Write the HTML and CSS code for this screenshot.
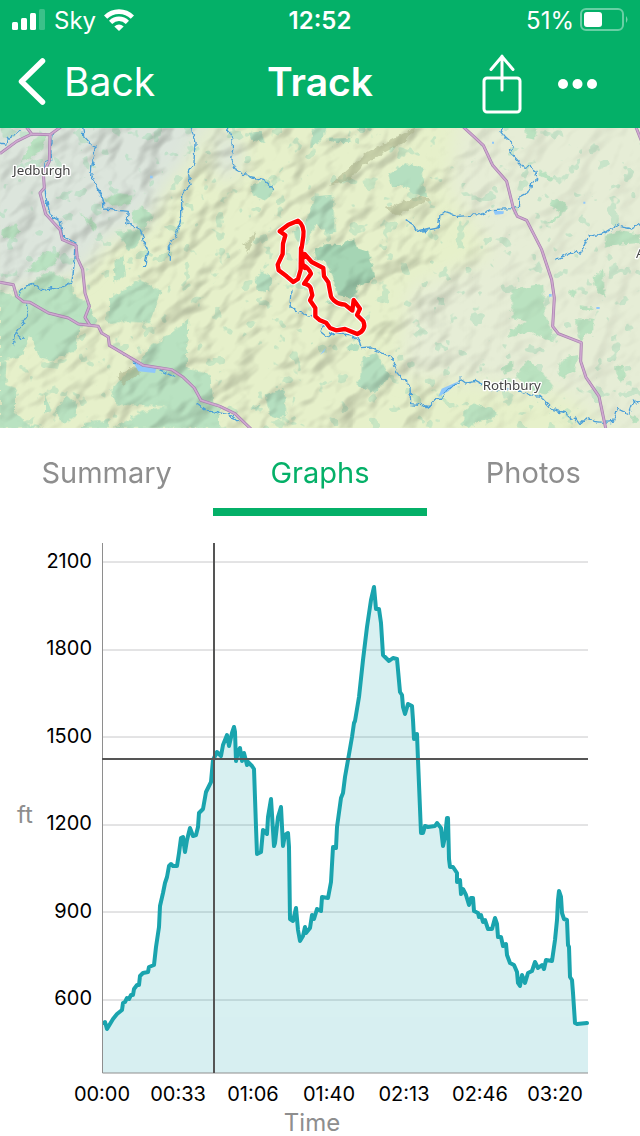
FILE: index.html
```
<!DOCTYPE html>
<html lang="en">
<head>
<meta charset="utf-8">
<meta name="viewport" content="width=device-width, initial-scale=1">
<link rel="stylesheet" href="styles.css">
<title>Track</title>
</head>
<body>
  <header class="top">
    <div class="status">
      <div class="status-left">
        <svg width="34" height="22" viewBox="0 0 34 22" fill="#fff">
          <rect x="0" y="13" width="6" height="8" rx="1.5"/>
          <rect x="9" y="9" width="6" height="12" rx="1.5"/>
          <rect x="18" y="4" width="6" height="17" rx="1.5"/>
          <rect x="27" y="0" width="6" height="21" rx="1.5" opacity=".22"/>
        </svg>
        <span>Sky</span>
        <svg width="30" height="22" viewBox="0 0 30 22" fill="none" stroke="#fff" stroke-width="4.600">
          <path d="M1.6 8.2C9 .8 21 .8 28.400 8.200"/>
          <path d="M6.600 13.300C11.500 8.600 18.500 8.600 23.400 13.300"/>
          <path d="M15 22L10.300 17.400Q15 13.600 19.700 17.400Z" fill="#fff" stroke="none"/>
        </svg>
      </div>
      <span class="clock">12:52</span>
      <div class="status-right">
        <span>51%</span>
        <svg width="48" height="24" viewBox="0 0 48 24">
          <rect x="1" y="1" width="42" height="21" rx="5" fill="none" stroke="#fff" stroke-width="2" opacity=".4"/>
          <rect x="4" y="4" width="18" height="15" rx="3" fill="#fff"/>
          <path d="M46 8Q49 11.500 46 15Z" fill="#fff" opacity=".45"/>
        </svg>
      </div>
    </div>
    <nav class="bar">
      <a class="back" href="#">
        <svg width="28" height="48" viewBox="0 0 28 48" fill="none" stroke="#fff" stroke-width="5.500" stroke-linecap="round" stroke-linejoin="round"><path d="M24.500 4L3.500 24.500L24.500 45"/></svg>
        Back
      </a>
      <h1>Track</h1>
      <div class="actions">
        <button type="button" aria-label="Share">
          <svg width="40" height="60" viewBox="0 0 40 60" fill="none" stroke="#fff" stroke-width="3" stroke-linecap="round" stroke-linejoin="round"><rect x="2" y="24" width="36" height="34" rx="3"/><path d="M20 36V2M9 15.500L20 2.500L31 15.500"/></svg>
        </button>
        <button type="button" aria-label="More">
          <svg width="40" height="10" viewBox="0 0 40 10" fill="#fff"><circle cx="5" cy="5" r="5"/><circle cx="19.500" cy="5" r="5"/><circle cx="34" cy="5" r="5"/></svg>
        </button>
      </div>
    </nav>
  </header>

  <main>
    <svg class="map" viewBox="0 0 1920 900" role="img" aria-label="Map of the track between Jedburgh and Rothbury">
      <defs>
        <filter id="relief" x="0" y="0" width="100%" height="100%" color-interpolation-filters="sRGB">
          <feTurbulence type="fractalNoise" baseFrequency=".007 .011" numOctaves="3" seed="12"/>
          <feDiffuseLighting surfaceScale="42" diffuseConstant="1.12" lighting-color="#fff">
            <feDistantLight azimuth="250" elevation="62"/>
          </feDiffuseLighting>
        </filter>
        <filter id="patches" x="0" y="0" width="100%" height="100%" color-interpolation-filters="sRGB">
          <feTurbulence type="fractalNoise" baseFrequency=".022" numOctaves="3" seed="5"/>
          <feColorMatrix values="0 0 0 0 .69  0 0 0 0 .87  0 0 0 0 .75  22 0 0 0 -14.500"/>
        </filter>
        <filter id="rough" x="0" y="0" width="1920" height="900" filterUnits="userSpaceOnUse" color-interpolation-filters="sRGB">
          <feTurbulence type="fractalNoise" baseFrequency=".06" numOctaves="2" seed="3"/>
          <feDisplacementMap in="SourceGraphic" scale="18" xChannelSelector="R" yChannelSelector="G"/>
        </filter>
        <filter id="soft"><feGaussianBlur stdDeviation="28"/></filter>
        <linearGradient id="fade">
          <stop offset="0" stop-color="#bbb"/>
          <stop offset=".3" stop-color="#fff"/>
          <stop offset=".62" stop-color="#fff"/>
          <stop offset=".8" stop-color="#555"/>
        </linearGradient>
        <mask id="hills"><rect width="1920" height="900" fill="url(#fade)"/></mask>
      </defs>
      <rect width="1920" height="900" fill="#e6f0ca"/>
      <!-- farmland -->
      <g filter="url(#soft)">
        <path fill="#dce5dc" d="M-60-60H640L560 110L500 170L440 300L330 330L240 440L0 500L-60 480Z"/>
        <path fill="#e6edd6" d="M1380-60H2000V960H1880L1700 800L1200 740L1230 480L1480 380L1350 180Z"/>
        <path fill="#dce5dc" d="M650-20L730 60L700 150L650 150Z"/>
      </g>
      <rect width="1920" height="900" filter="url(#patches)" opacity=".55"/>
      <!-- forests -->
      <g filter="url(#rough)">
        <g fill="#b9e2c1">
          <path d="M60 100L100 40L140 10L130 60L85 95ZM10 300L50 290L60 310L40 335L5 325ZM310 215L350 195L395 200L390 230L340 232ZM395 250L425 235L458 265L435 300L400 285ZM345 310L425 305L420 340L385 370L365 335ZM240 250L290 290L280 310ZM75 430L130 375L180 370L165 410L110 432ZM340 400L370 385L378 440L345 462Z"/>
          <path d="M60 485L150 430L215 460L220 500L270 530L290 590L240 595L225 670L150 700L120 690L90 620L60 690L0 700V490L40 500Z"/>
          <path d="M328 510L420 455L485 490L450 585L370 580L325 590Z"/>
          <path d="M445 660L500 625L565 575L560 720L630 740L640 820L660 835V900H340L430 850L500 835L350 830L330 790L370 745L410 720Z"/>
          <path d="M0 700L20 700L15 770L45 780L45 850L80 885L130 900H0ZM165 850L200 800L232 830L225 865L190 890ZM250 885L330 875L325 900H245ZM135 800L155 850L135 855Z"/>
        </g>
        <g fill="#b5dfc0" transform="translate(630 0)">
          <path d="M115 15L155 10L165 45L130 38ZM310 0H350L330 40L300 60ZM350 32L420 30L422 45L380 46ZM120 170L180 155L195 190L160 218L130 200ZM535 140L590 105L638 120L642 205L610 195L580 175L550 178ZM250 310L285 285L318 205L368 200L375 312L350 318L320 285L285 345L260 340Z"/>
          <path d="M312 365L350 348L390 352L432 330L440 360L475 372L497 450L440 478L430 510L385 505L370 450L345 400L320 395Z" fill="#a5d5b4"/>
          <path d="M135 450L155 430L185 450L180 490L140 485ZM355 510L375 505L370 530L350 525ZM455 690L500 675L540 745L495 795L440 770L455 740ZM410 655L430 645L450 655L440 670L415 670ZM165 800L220 780L232 850L210 875L180 865ZM125 840L150 825L140 850ZM440 0H465L460 20Z"/>
        </g>
        <g fill="#bae2c0" transform="translate(1260 0)">
          <path d="M315 0H350L345 35L320 30ZM0 115L15 190L20 205L0 210ZM395 210L435 225L440 240L400 285L385 285L420 255L390 230ZM275 485L320 478L370 470L375 560L400 620L395 645L330 610L265 630L270 610L320 580L275 570ZM450 490L465 480L470 495L455 508ZM515 450L550 425L555 510L530 485ZM465 570L520 575L520 605L480 640ZM430 690L475 680L460 730L430 750L410 735ZM245 720L280 695L280 725L255 738ZM290 740L320 695L370 735L400 775L380 800L330 790ZM555 320L600 310L660 320V345L590 350L555 360ZM480 535L530 540L520 547L480 542ZM155 825L230 850L225 870L170 880L150 900L125 890L130 850ZM585 715L610 710L615 740L605 765L590 740ZM355 120L400 150L395 162L360 140ZM630 860L660 875L640 890Z"/>
        </g>
      </g>
      <!-- hill shading -->
      <g class="shade" mask="url(#hills)">
        <rect x="-300" y="-900" width="2600" height="2600" filter="url(#relief)" transform="rotate(-38 960 450)"/>
      </g>
      <g fill="#a6ad86" opacity=".5" filter="url(#rough)">
        <path d="M990 170L1040 125L1100 75L1200 22L1245 0L1220 38L1150 75L1080 120L1050 155Z"/>
        <path d="M1160 240L1260 205L1290 215L1190 262ZM730 350L770 310L745 375ZM350 745L400 715L420 735L370 770Z"/>
      </g>
      <!-- lakes -->
      <g fill="#8fc7fa">
        <path d="M398 700L470 718L465 735L415 730Z"/>
        <path d="M960 680L977 660L972 672ZM1315 806L1325 782L1380 758L1345 790ZM1480 248L1512 250L1510 258L1485 260Z"/>
        <path d="M450 143h8v8h-8zM1647 498h8v8h-8zM1789 537h10v6h-10zM1476 41h6v6h-6zM1750 221h6v6h-6z"/>
      </g>
      <!-- rivers -->
      <g class="rivers" filter="url(#rough)">
        <path d="M0 48L20 52L25 32L50 18L62 5M162 10L152 60L155 95L135 105L132 160L138 210L150 260L180 278L188 325L228 345L225 395L215 465L180 478L125 488L100 467L62 485L58 500"/>
        <path d="M248 0L252 25L285 60L272 140L290 170L310 220L312 243L385 250L380 285L420 305L443 370L433 418"/>
        <path d="M574 0L585 45L582 105L565 130L570 170L545 200L545 265L525 330L508 355L508 398"/>
        <path d="M78 525L85 560L50 610L40 635L44 658M50 612L68 635M590 825L625 850L660 858M370 680L410 705M475 725L520 745"/>
        <g transform="translate(630 0)">
          <path d="M52 0L65 30L68 65L62 95L75 122L125 150L165 158L195 185M243 485L240 535L262 550L305 563L340 590L330 610L348 625L375 615L425 622L448 640L455 662L485 660L545 688L560 730L600 775L602 830L660 835M0 850L60 860L90 882M590 278L610 290L620 310L660 300"/>
        </g>
        <g transform="translate(1260 0)">
          <path d="M0 310L55 300L60 260L72 250L115 265L180 260L215 245L275 242L298 238L300 205L330 190L335 165L350 155L348 130L325 115L312 118L270 72L280 50L255 28L240 10L248 0"/>
          <path d="M405 395L460 370L482 375L505 325L550 318L590 293L635 303L660 288M0 825L25 838L50 812L65 810L80 785L115 765L120 750L140 765L170 760L215 785L240 790L270 775L330 800L360 805L400 845L440 855L450 875L465 870L480 890L500 870L520 880L550 883L580 880L592 842L625 858L640 815L660 825"/>
        </g>
      </g>
      <!-- roads -->
      <g class="road">
        <path id="r1" d="M0 77L50 40L95 18L150 20L185-5M78-5L95 18M150 20L148 100L130 135L133 180L120 195L137 258L180 305L187 335L228 352L232 390L248 425L255 495L268 535L255 568L270 592"/>
        <path id="r2" d="M0 463L40 470L50 505L70 521L90 523L145 555L205 570L235 588L295 595L305 615L325 627L328 652L345 662L430 712L515 725L550 748L583 780L603 817L660 835L705 857L755 905"/>
        <path id="r3" d="M1388-5L1450 52L1478 112L1520 160L1540 240L1552 265L1580 277L1625 365L1655 455L1663 510L1658 595L1675 617L1744 644L1742 700L1758 748L1797 805L1818 905M1907-5L1925 40"/>
      </g>
      <g class="road-fill">
        <use href="#r1"/><use href="#r2"/><use href="#r3"/>
      </g>
      <!-- recorded track -->
      <defs>
        <path id="track" d="M275 360L280 325Q284 292 264 278L235 290L209 310L226 322L219 347L218 378L203 410L206 427L230 445L250 462L264 453L272 425L273 360L278 410Q298 422 303 437L282 467Q298 470 302 480L307 502L300 517L316 540V565L330 577L348 584L360 600L378 607L405 603L442 618Q456 612 460 603Q466 594 460 580L441 561L450 542L431 516L427 548L405 530Q385 528 378 522Q362 510 362 500L355 463L342 445L340 420L305 402L284 378L272 405L285 420"/>
      </defs>
      <g class="track" transform="translate(630 0)">
        <use href="#track" class="track-edge"/>
        <use href="#track" class="track-line"/>
      </g>
      <g class="places">
        <text x="39" y="140">Jedburgh</text>
        <text x="1448" y="787">Rothbury</text>
        <text x="1908" y="390">A</text>
      </g>
    </svg>

    <nav class="tabs">
      <a href="#">Summary</a>
      <a href="#" class="active" aria-current="page">Graphs</a>
      <a href="#">Photos</a>
    </nav>

    <svg class="chart" viewBox="0 0 640 620" role="img" aria-label="Elevation in feet against time">
      <defs>
        <path id="elevation" d="M2 480L3 479L5 486L8 481L11 476L15 471L20 467L21 460L23 459L25 455L27 456L29 452L31 452L32 446L35 442L37 442L38 433L41 430L46 429L47 424L52 422L54 404L57 384L58 363L61 350L63 340L65 334L67 323L69 321L71 323L75 323L77 310L79 295L81 294L83 309L85 297L88 285L91 293L94 292L96 284L97 270L101 266L104 249L109 239L111 217L115 209L119 213L121 202L125 192L127 203L130 190L132 184L133 189L134 218L136 209L138 205L140 218L142 210L145 222L146 219L150 223L152 226L154 284L155 311L159 309L161 287L165 291L166 274L169 256L172 303L173 300L176 274L179 264L181 303L183 292L186 290L187 304L188 376L191 378L194 365L196 387L198 398L201 393L203 384L204 390L208 385L210 372L212 376L215 366L219 368L220 354L226 355L229 339L231 304L234 305L235 284L239 255L241 250L243 234L246 217L250 194L252 180L253 178L257 154L261 117L265 84L269 57L272 44L274 66L277 66L279 80L281 112L287 118L291 115L295 116L298 149L300 152L301 164L303 171L306 161L310 163L311 177L312 196L315 191L316 217L319 290L321 290L323 283L326 284L333 283L335 280L339 285L341 303L343 294L345 275L346 275L347 316L348 324L351 324L355 330L355 339L358 337L359 351L361 346L364 352L367 362L369 355L371 355L372 368L376 370L377 374L379 372L381 379L383 377L386 386L390 386L393 375L395 381L396 394L399 394L401 403L404 401L405 412L408 420L412 422L415 429L416 440L418 443L420 432L423 440L426 430L430 428L433 419L436 425L440 422L442 426L444 417L450 418L453 397L455 377L456 357L457 348L459 354L460 370L462 376L465 377L466 402L467 404L468 434L470 437L471 450L473 480L475 481L485 480"/>
      </defs>
      <g transform="translate(102 27)">
        <path class="grid" d="M0 19H486M0 107H486M0 194H486M0 282H486M0 369H486M0 457H486"/>
        <g class="area">
          <use href="#elevation"/>
          <rect x="1" y="480" width="485" height="50"/>
        </g>
        <use href="#elevation" class="line"/>
        <path class="axis" d="M.5 0V530H486"/>
        <path class="cursor" d="M112 0V530M0 216H486"/>
      </g>
      <g class="y-labels">
        <text x="92" y="52">2100</text>
        <text x="92" y="139">1800</text>
        <text x="92" y="227">1500</text>
        <text x="92" y="314">1200</text>
        <text x="92" y="402">900</text>
        <text x="92" y="489">600</text>
      </g>
      <g class="x-labels">
        <text x="102" y="585">00:00</text>
        <text x="178" y="585">00:33</text>
        <text x="253" y="585">01:06</text>
        <text x="329" y="585">01:40</text>
        <text x="404" y="585">02:13</text>
        <text x="480" y="585">02:46</text>
        <text x="555" y="585">03:20</text>
      </g>
      <g class="units">
        <text x="25" y="307">ft</text>
        <text x="312" y="615">Time</text>
      </g>
    </svg>
  </main>
</body>
</html>
```
FILE: styles.css
```
body {
  margin: 0;
  background-color: white;
  font-family: Inter, "Liberation Sans", sans-serif;
}

a {
  text-decoration: none;
}

.top {
  background-color: #04b068;
  color: white;
}

.status {
  display: grid;
  grid-template-columns: 1fr auto 1fr;
  align-items: center;
  height: 40px;
  padding: 0 12px;
  font-size: 24px;
}

.status-left,
.status-right {
  display: flex;
  align-items: center;
  gap: 8px;
}

.status-right {
  justify-content: flex-end;
  gap: 6px;
}

.clock {
  font-weight: 600;
}

.bar {
  display: grid;
  grid-template-columns: 1fr auto 1fr;
  align-items: center;
  height: 88px;
  padding: 0 18px;
  box-sizing: border-box;
}

.back {
  display: flex;
  align-items: center;
  gap: 18px;
  padding-bottom: 6px;
  color: white;
  font-size: 39px;
}

.bar h1 {
  margin: 0;
  padding-bottom: 6px;
  font-size: 39px;
  font-weight: 600;
}

.actions {
  display: flex;
  justify-content: flex-end;
  align-items: center;
  gap: 36px;
  padding-right: 24px;
}

.actions button {
  display: flex;
  padding: 0;
  border: none;
  background: none;
  color: white;
  cursor: pointer;
}

.map,
.chart {
  display: block;
  width: 100%;
  height: auto;
}

.map {
  overflow: hidden;
}

.shade {
  mix-blend-mode: multiply;
  opacity: 0.22;
}

.rivers {
  fill: none;
  stroke: #4a9fd8;
  stroke-width: 4px;
  stroke-linejoin: round;
}

.road {
  fill: none;
  stroke: #a77fae;
  stroke-width: 9px;
  stroke-linejoin: round;
}

.road-fill use {
  fill: none;
  stroke: #cfa9d0;
  stroke-width: 5px;
}

.track {
  fill: none;
  stroke-linecap: round;
  stroke-linejoin: round;
}

.track-edge {
  stroke: white;
  stroke-width: 19px;
}

.track-line {
  stroke: red;
  stroke-width: 13px;
}

.places {
  font-family: "Noto Sans", sans-serif;
  font-size: 40px;
  fill: #444;
  stroke: white;
  stroke-width: 8px;
  stroke-linejoin: round;
  paint-order: stroke;
}

.tabs {
  display: grid;
  grid-template-columns: 1fr 1fr 1fr;
}

.tabs a {
  height: 80px;
  border-bottom: 8px solid transparent;
  color: #8e8e8e;
  font-size: 29px;
  line-height: 90px;
  text-align: center;
}

.tabs .active {
  border-color: #04b068;
  color: #04b068;
}

.grid {
  fill: none;
  stroke: #c8c8ca;
  stroke-width: 1px;
}

.area {
  fill: #1aa4ae;
  opacity: 0.17;
}

.line {
  fill: none;
  stroke: #1aa4ae;
  stroke-width: 4px;
  stroke-linecap: round;
  stroke-linejoin: round;
}

.axis {
  fill: none;
  stroke: #8e8e8e;
  stroke-width: 1px;
}

.cursor {
  stroke: #555;
  stroke-width: 2px;
}

.y-labels,
.x-labels {
  fill: black;
  font-size: 20px;
}

.y-labels {
  text-anchor: end;
}

.x-labels,
.units {
  text-anchor: middle;
}

.units {
  fill: #8e8e8e;
  font-size: 24px;
}
```
